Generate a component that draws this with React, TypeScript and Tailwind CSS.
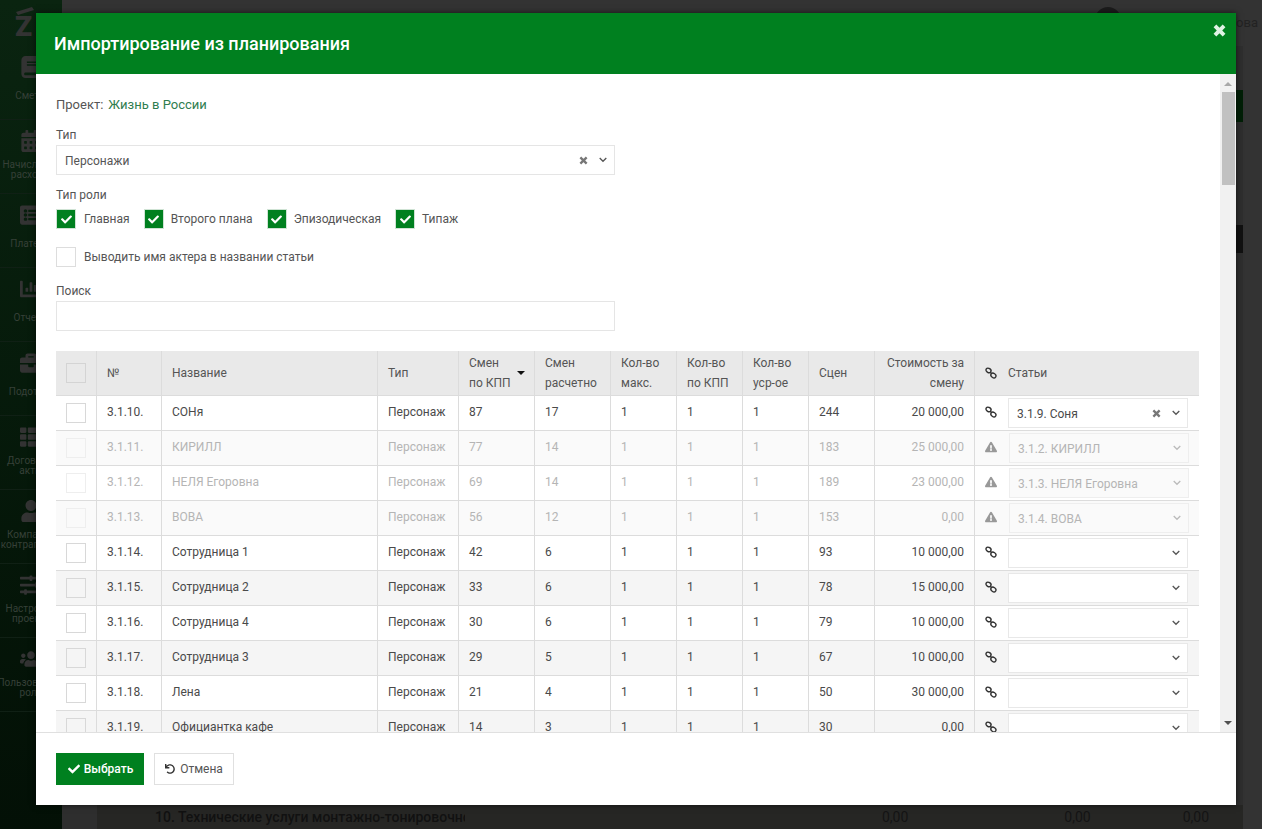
import React from "react";
import {
  FaBook, FaCalendarAlt, FaListAlt, FaChartBar, FaBriefcase, FaThList, FaUser, FaSlidersH, FaUsers,
  FaCheck, FaExclamationTriangle, FaUndo,
} from "react-icons/fa";

type Row = {
  no: string; name: string; kpp: string; calc: string; scenes: string; cost: string;
  off?: boolean; article?: string; clear?: boolean;
};

const rows: Row[] = [
  { no: "3.1.10.", name: "СОНя", kpp: "87", calc: "17", scenes: "244", cost: "20 000,00", article: "3.1.9. Соня", clear: true },
  { no: "3.1.11.", name: "КИРИЛЛ", kpp: "77", calc: "14", scenes: "183", cost: "25 000,00", off: true, article: "3.1.2. КИРИЛЛ" },
  { no: "3.1.12.", name: "НЕЛЯ Егоровна", kpp: "69", calc: "14", scenes: "189", cost: "23 000,00", off: true, article: "3.1.3. НЕЛЯ Егоровна" },
  { no: "3.1.13.", name: "ВОВА", kpp: "56", calc: "12", scenes: "153", cost: "0,00", off: true, article: "3.1.4. ВОВА" },
  { no: "3.1.14.", name: "Сотрудница 1", kpp: "42", calc: "6", scenes: "93", cost: "10 000,00" },
  { no: "3.1.15.", name: "Сотрудница 2", kpp: "33", calc: "6", scenes: "78", cost: "15 000,00" },
  { no: "3.1.16.", name: "Сотрудница 4", kpp: "30", calc: "6", scenes: "79", cost: "10 000,00" },
  { no: "3.1.17.", name: "Сотрудница 3", kpp: "29", calc: "5", scenes: "67", cost: "10 000,00" },
  { no: "3.1.18.", name: "Лена", kpp: "21", calc: "4", scenes: "50", cost: "30 000,00" },
  { no: "3.1.19.", name: "Официантка кафе", kpp: "14", calc: "3", scenes: "30", cost: "0,00" },
];

const side: { icon: React.ReactNode; lines: string[] }[] = [
  { icon: <FaBook />, lines: ["Сметы"] },
  { icon: <FaCalendarAlt />, lines: ["Начисления", "расходы"] },
  { icon: <FaListAlt />, lines: ["Платежи"] },
  { icon: <FaChartBar />, lines: ["Отчеты"] },
  { icon: <FaBriefcase />, lines: ["Подотчет"] },
  { icon: <FaThList />, lines: ["Договоры", "акты"] },
  { icon: <FaUser />, lines: ["Компании", "контрагенты"] },
  { icon: <FaSlidersH />, lines: ["Настройки", "проекта"] },
  { icon: <FaUsers />, lines: ["Пользователи", "роли"] },
];

const Chain = ({ className = "" }: { className?: string }) => (
  <svg width="12" height="12" viewBox="0 0 12 12" fill="none" stroke="#333" strokeWidth="1.4" className={"shrink-0 " + className}>
    <ellipse cx="3.5" cy="3.4" rx="2.7" ry="2.1" transform="rotate(35 3.5 3.4)" />
    <ellipse cx="8.4" cy="8.5" rx="2.7" ry="2.1" transform="rotate(35 8.4 8.5)" />
    <path d="M5.2 5.2 L6.8 6.8" />
  </svg>
);

const Chevron = ({ color = "#555" }: { color?: string }) => (
  <svg width="8" height="6" viewBox="0 0 8 6" fill="none" stroke={color} strokeWidth="1.3" className="shrink-0">
    <path d="M0.7 1 L4 4.3 L7.3 1" />
  </svg>
);

const Cross = ({ size, color, w }: { size: number; color: string; w: number }) => (
  <svg width={size} height={size} viewBox="0 0 10 10" fill="none" stroke={color} strokeWidth={w} className="shrink-0">
    <path d="M1.5 1.5 L8.5 8.5 M8.5 1.5 L1.5 8.5" />
  </svg>
);

const RoleCheck = ({ label, first }: { label: string; first?: boolean }) => (
  <div className={"flex items-center mr-[14px] " + (first ? "gap-[8px]" : "gap-[7px]")}>
    <span className="w-[20px] h-[20px] bg-[#00801f] border border-[#cfe3d4] flex items-center justify-center text-white text-[11px]">
      <FaCheck />
    </span>
    <span className="text-[12px] text-[#555]">{label}</span>
  </div>
);

const headCell = "border-r border-b border-[#dcdcdc] px-[10px] font-normal text-left align-middle text-[#555] leading-[20px] whitespace-nowrap";
const cell = "border-r border-b border-[#dcdcdc] px-[10px] pb-[2px] align-middle h-[35px] whitespace-nowrap";

export default function App() {
  return (
    <div className="relative w-full h-screen overflow-hidden bg-[#2f2f2f] flex font-['Roboto',sans-serif] text-[12px]">
      {/* page behind the dialog */}
      <aside className="w-[62px] shrink-0 bg-gradient-to-b from-[#0a2410] to-[#031006] flex flex-col text-[#364038] overflow-hidden">
        <div className="h-[46px] shrink-0 flex flex-col pl-[15px] pt-[7px] text-[#333]">
          <svg width="20" height="9" viewBox="0 0 20 9" fill="#333" className="shrink-0"><path d="M1 5 L17 0 L19 3 L3 8 Z" /></svg>
          <span className="text-[28px] leading-[22px] font-black">Z</span>
        </div>
        {side.map((s, i) => (
          <div key={i} className="h-[74px] shrink-0 border-b border-[#102015] flex flex-col items-center pt-[10px] text-center">
            <span className="text-[22px] h-[28px] text-[#333]">{s.icon}</span>
            <div className="mt-[1px] h-[22px] flex flex-col justify-center text-[10px] leading-[10px] whitespace-nowrap">
              {s.lines.map((l) => <div key={l}>{l}</div>)}
            </div>
          </div>
        ))}
      </aside>
      <main className="flex-1 min-w-0 flex flex-col bg-[#333]">
        <div className="h-[46px] shrink-0 flex justify-end items-start pt-[13px] pr-[4px] text-[#222] text-[13px] gap-[84px]">
          <span className="w-[26px] h-[26px] -mt-[6px] rounded-full bg-[#1c1c1c]" />
          <span>Иванова</span>
        </div>
        <div className="flex-1 flex flex-col mr-[19px] bg-[#2e2e2e]">
          <div className="ml-auto mt-[44px] w-[120px] h-[32px] bg-[#001f06]" />
          <div className="ml-auto mt-[103px] w-[400px] h-[28px] bg-[#111]" />
          <div className="mt-auto h-[24px] flex items-center text-[#111] text-[14px] bg-[#262624] ml-[35px]">
            <span className="ml-[58px] font-medium overflow-hidden whitespace-nowrap w-[310px]">10. Технические услуги монтажно-тонировочного цеха</span>
            <span className="ml-[417px] text-[#141414]">0,00</span>
            <span className="ml-[156px] text-[#141414]">0,00</span>
            <span className="ml-[92px] text-[#141414]">0,00</span>
          </div>
        </div>
      </main>

      {/* dialog */}
      <div className="absolute left-[36px] top-[13px] w-[1200px] h-[792px] bg-white flex flex-col shadow-[0_0_6px_rgba(0,0,0,0.6)]">
        <header className="relative h-[61px] shrink-0 bg-[#00801f] flex items-center pl-[18px] text-white text-[18px] font-medium">
          Импортирование из планирования
          <span className="absolute right-[10px] top-[11px]"><Cross size={13} color="#dff3e4" w={3} /></span>
        </header>

        <div className="flex-1 min-h-0 flex">
          <div className="flex-1 min-w-0 overflow-hidden pl-[20px] pr-[21px] pt-[21px] text-[#555] text-[12px]">
            <div className="h-[18px] leading-[20px] flex gap-[5px] text-[13px]">
              <span>Проект:</span>
              <span className="text-[#2f7d4f]">Жизнь в России</span>
            </div>
            <div className="mt-[12px] h-[18px] leading-[20px]">Тип</div>
            <div className="mt-[2px] w-[559px] h-[30px] border border-[#e5e5e5] flex items-center pl-[8px] pr-[7px]">
              <span className="flex-1 pt-[1px]">Персонажи</span>
              <span className="mr-[11px]"><Cross size={9} color="#777" w={2.6} /></span>
              <Chevron />
            </div>
            <div className="mt-[10px] h-[18px] leading-[20px]">Тип роли</div>
            <div className="mt-[6px] h-[20px] flex">
              <RoleCheck label="Главная" first />
              <RoleCheck label="Второго плана" />
              <RoleCheck label="Эпизодическая" />
              <RoleCheck label="Типаж" />
            </div>
            <div className="mt-[18px] h-[20px] flex items-center gap-[8px]">
              <span className="w-[20px] h-[20px] border border-[#ddd]" />
              <span>Выводить имя актера в названии статьи</span>
            </div>
            <div className="mt-[14px] h-[18px] leading-[20px]">Поиск</div>
            <div className="mt-[2px] w-[559px] h-[30px] border border-[#e5e5e5]" />

            <table className="mt-[20px] w-[1143px] table-fixed border-separate border-spacing-0">
              <colgroup>
                <col className="w-[41px]" /><col className="w-[65px]" /><col className="w-[216px]" /><col className="w-[81px]" />
                <col className="w-[76px]" /><col className="w-[76px]" /><col className="w-[66px]" /><col className="w-[66px]" />
                <col className="w-[66px]" /><col className="w-[66px]" /><col className="w-[100px]" /><col className="w-[224px]" />
              </colgroup>
              <thead>
                <tr className="bg-[#e9e9e9] h-[45px]">
                  <th className={headCell}>
                    <span className="block w-[20px] h-[20px] border border-[#d4d4d4]" />
                  </th>
                  <th className={headCell}>№</th>
                  <th className={headCell}>Название</th>
                  <th className={headCell}>Тип</th>
                  <th className={headCell}>
                    <div className="flex items-center justify-between">
                      <span>Смен<br />по КПП</span>
                      <span className="w-0 h-0 border-l-[4px] border-r-[4px] border-t-[4px] border-l-transparent border-r-transparent border-t-[#111] -mr-[1px]" />
                    </div>
                  </th>
                  <th className={headCell}>Смен<br />расчетно</th>
                  <th className={headCell}>Кол-во<br />макс.</th>
                  <th className={headCell}>Кол-во<br />по КПП</th>
                  <th className={headCell}>Кол-во<br />уср-ое</th>
                  <th className={headCell}>Сцен</th>
                  <th className={headCell + " !text-right"}>Стоимость за<br />смену</th>
                  <th className="border-b border-[#dcdcdc] pl-[10px] font-normal text-left text-[#555]">
                    <div className="flex items-center gap-[11px]"><Chain /><span>Статьи</span></div>
                  </th>
                </tr>
              </thead>
              <tbody>
                {rows.map((r, i) => {
                  const even = i % 2 === 1;
                  const bg = even ? (r.off ? "bg-[#fafafa]" : "bg-[#f5f5f5]") : "bg-white";
                  const tone = r.off ? "text-[#b5b5b5]" : "text-[#4a4a4a]";
                  return (
                    <tr key={r.no} className={bg + " " + tone}>
                      <td className={"border-r border-b border-[#dcdcdc] px-[10px] align-middle h-[35px]"}>
                        <span className={"block w-[20px] h-[20px] border " + (r.off ? "border-[#eee]" : "border-[#d8d8d8]")} />
                      </td>
                      <td className={cell}>{r.no}</td>
                      <td className={cell}>{r.name}</td>
                      <td className={cell}>Персонаж</td>
                      <td className={cell}>{r.kpp}</td>
                      <td className={cell}>{r.calc}</td>
                      <td className={cell}>1</td>
                      <td className={cell}>1</td>
                      <td className={cell}>1</td>
                      <td className={cell}>{r.scenes}</td>
                      <td className={cell + " text-right"}>{r.cost}</td>
                      <td className="border-b border-[#dcdcdc] pl-[10px] h-[35px]">
                        <div className="flex items-center">
                          {r.off ? (
                            <span className="w-[13px] text-[12px] text-[#999] -mt-[3px]"><FaExclamationTriangle /></span>
                          ) : (
                            <Chain className="-mt-[3px]" />
                          )}
                          <div
                            className={
                              "h-[30px] border flex items-center pr-[7px] pl-[8px] w-[180px] " +
                              (r.off
                                ? "ml-[11px] bg-[#fafafa] border-[#eee]"
                                : "ml-[11px] bg-white border-[#e8e8e8] text-[#4a4a4a]")
                            }
                          >
                            <span className="flex-1 truncate pt-[1px]">{r.article ?? ""}</span>
                            {r.clear && <span className="mr-[11px]"><Cross size={9} color="#777" w={2.6} /></span>}
                            <Chevron color={r.off ? "#bbb" : "#555"} />
                          </div>
                        </div>
                      </td>
                    </tr>
                  );
                })}
              </tbody>
            </table>
          </div>

          {/* scrollbar */}
          <div className="w-[16px] shrink-0 bg-[#f1f1f1] flex flex-col items-center">
            <span className="mt-[8px] w-0 h-0 border-l-[4px] border-r-[4px] border-b-[4px] border-l-transparent border-r-transparent border-b-[#a8a8a8]" />
            <span className="mt-[6px] w-[13px] h-[93px] bg-[#c1c1c1]" />
            <span className="mt-auto mb-[7px] w-0 h-0 border-l-[4px] border-r-[4px] border-t-[4px] border-l-transparent border-r-transparent border-t-[#505050]" />
          </div>
        </div>

        <footer className="h-[73px] shrink-0 border-t border-[#e0e0e0] flex items-start pt-[20px] pl-[20px] gap-[10px]">
          <button className="w-[88px] h-[32px] bg-[#00801f] text-white font-medium flex items-center justify-center gap-[4px] text-[12px] pl-[1px]">
            <span className="text-[12px]"><FaCheck /></span>Выбрать
          </button>
          <button className="w-[80px] h-[32px] bg-white border border-[#e0e0e0] text-[#555] flex items-center justify-center gap-[5px] text-[12px]">
            <span className="text-[10px] text-[#333]"><FaUndo /></span>Отмена
          </button>
        </footer>
      </div>
    </div>
  );
}
